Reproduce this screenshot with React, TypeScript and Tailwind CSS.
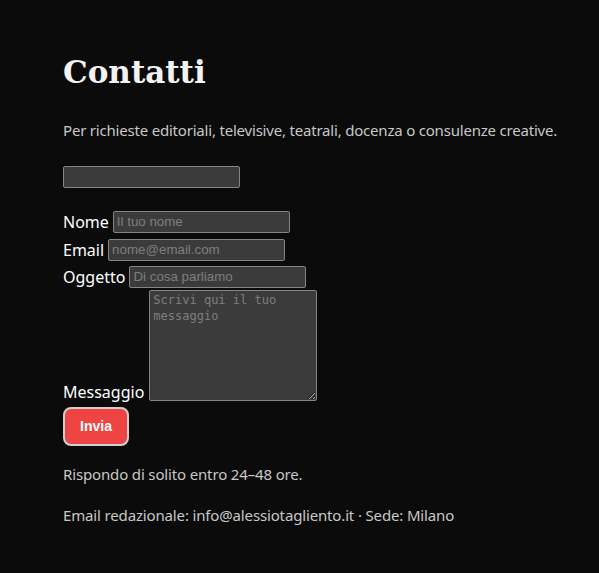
export default function App() {
  const inputCls =
    "h-[22px] w-[177px] bg-[#3b3b3b] border border-[#858585] rounded-[2px] px-[3px] text-[13.33px] text-[#e5e5e5] placeholder:text-[#7e7e7e] outline-none";
  const ff = { fontFamily: '"Liberation Sans", Arial, sans-serif' };
  return (
    <div className="min-h-[573px] w-full bg-[#0b0b0b] text-white" style={{ fontFamily: '"Noto Sans", sans-serif' }}>
      <div className="px-[63px] pt-[50px]">
        <h1 className="text-[31px] leading-[44px] font-bold text-[#f2f2f2]" style={{ fontFamily: '"DejaVu Serif", Georgia, serif' }}>
          Contatti
        </h1>
        <p className="mt-[25px] whitespace-nowrap text-[15px] leading-[22px] tracking-[-0.2px] text-[#c8c8c8]">
          Per richieste editoriali, televisive, teatrali, docenza o consulenze creative.
        </p>
        <div className="mt-[22px]">
          <input className={inputCls} style={ff} />
        </div>
        <div className="mt-[20px] flex h-[28px] items-center gap-[4px]">
          <label className="text-[16px] leading-[20px]">Nome</label>
          <input className={inputCls} placeholder="Il tuo nome" style={ff} />
        </div>
        <div className="flex h-[28px] items-center gap-[4px]">
          <label className="text-[16px] leading-[20px]">Email</label>
          <input className={inputCls} placeholder="nome@email.com" style={ff} />
        </div>
        <div className="flex h-[26px] items-center gap-[4px]">
          <label className="text-[16px] leading-[20px]">Oggetto</label>
          <input className={inputCls} placeholder="Di cosa parliamo" style={ff} />
        </div>
        <div className="flex items-end gap-[5px]">
          <label className="text-[16px] leading-[18px]">Messaggio</label>
          <textarea
            className="h-[111px] w-[168px] resize-y bg-[#3b3b3b] border border-[#858585] rounded-[2px] px-[3px] py-[1px] text-[12px] leading-[16px] text-[#e5e5e5] placeholder:text-[#7e7e7e] outline-none"
            placeholder="Scrivi qui il tuo messaggio"
            style={{ fontFamily: '"DejaVu Sans Mono", monospace' }}
          />
        </div>
        <button
          className="mt-[6px] h-[39px] w-[66px] rounded-[8px] border-2 border-[#cfcfcf] bg-[#ef4444] text-[14px] font-bold text-white"
          style={ff}
        >
          Invia
        </button>
        <p className="mt-[17px] text-[15px] leading-[22px] tracking-[-0.15px] text-[#c8c8c8]">Rispondo di solito entro 24–48 ore.</p>
        <p className="mt-[19px] text-[15px] leading-[22px] tracking-[-0.15px] text-[#c8c8c8]">
          Email redazionale: info@alessiotagliento.it · Sede: Milano
        </p>
      </div>
    </div>
  );
}
